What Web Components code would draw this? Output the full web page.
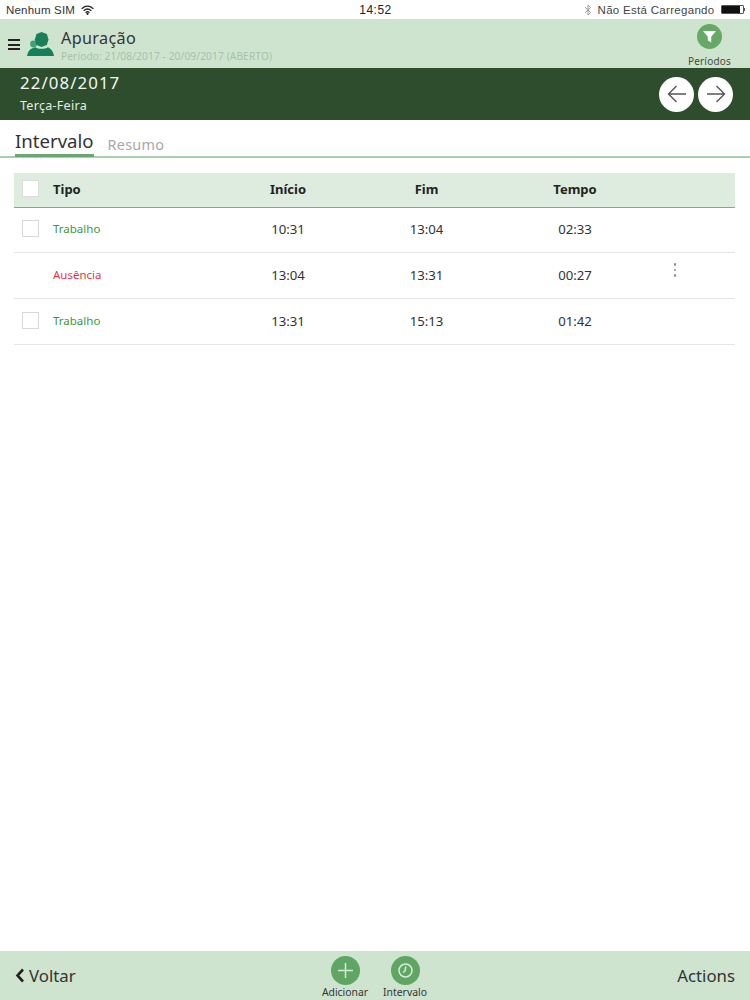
<!DOCTYPE html>
<html lang="pt">
<head>
<meta charset="utf-8">
<title>Apuração</title>
<style>
  html, body { margin: 0; height: 100%; background: #fff; }
  body { font-family: "Noto Sans", sans-serif; }
  app-shell { height: 1000px; }
</style>
</head>
<body>
<app-shell>
  <status-bar slot="top"></status-bar>
  <app-header slot="top"></app-header>
  <date-band slot="top" date="22/08/2017" weekday="Terça-Feira"></date-band>
  <tab-bar slot="top"></tab-bar>
  <interval-table>
    <interval-row tipo="Trabalho" inicio="10:31" fim="13:04" tempo="02:33" check></interval-row>
    <interval-row tipo="Ausência" inicio="13:04" fim="13:31" tempo="00:27" absent menu></interval-row>
    <interval-row tipo="Trabalho" inicio="13:31" fim="15:13" tempo="01:42" check></interval-row>
  </interval-table>
  <app-footer slot="bottom"></app-footer>
</app-shell>

<script>
class AppShell extends HTMLElement {
  constructor() {
    super();
    this.attachShadow({ mode: 'open' }).innerHTML = `
      <style>
        :host { display: flex; flex-direction: column; }
        main { flex: 1; }
      </style>
      <slot name="top"></slot>
      <main><slot></slot></main>
      <slot name="bottom"></slot>
    `;
  }
}

class StatusBar extends HTMLElement {
  constructor() {
    super();
    this.attachShadow({ mode: 'open' }).innerHTML = `
      <style>
        :host {
          display: grid; grid-template-columns: 1fr auto 1fr; align-items: center;
          height: 19px; padding: 0 5px 0 6px;
          font: 11.5px "Liberation Sans", sans-serif; color: #333; letter-spacing: .2px;
        }
        .left { display: flex; align-items: center; gap: 6px; }
        .mid { font-size: 12px; letter-spacing: .5px; color: #222; }
        .right { display: flex; align-items: center; justify-content: flex-end; gap: 6px; color: #444; letter-spacing: .3px; }
        .batt { display: flex; align-items: center; }
        .batt i { display: block; width: 21px; height: 7px; background: linear-gradient(90deg, #111 85%, #fff 85%); border: 1px solid #555; border-radius: 1px; }
        .batt b { display: block; width: 1.5px; height: 3px; background: #555; }
      </style>
      <div class="left">
        <span>Nenhum SIM</span>
        <svg width="13" height="10" viewBox="0 0 13 10" fill="none" stroke="#222" stroke-width="1.3" stroke-linecap="round">
          <path d="M1 3.4C4.3.5 8.7.5 12 3.4"/><path d="M3 5.4c2.1-1.7 4.9-1.7 7 0"/><path d="M5 7.3c.9-.7 2.1-.7 3 0"/>
          <circle cx="6.5" cy="8.8" r=".5" fill="#222"/>
        </svg>
      </div>
      <div class="mid">14:52</div>
      <div class="right">
        <svg width="8" height="12" viewBox="0 0 8 12" fill="none" stroke="#999" stroke-width="1">
          <path d="M1 3.2 6.6 8.4 4 11V1L6.6 3.6 1 8.8"/>
        </svg>
        <span>Não Está Carregando</span>
        <span class="batt"><i></i><b></b></span>
      </div>
    `;
  }
}

class AppHeader extends HTMLElement {
  constructor() {
    super();
    this.attachShadow({ mode: 'open' }).innerHTML = `
      <style>
        :host {
          display: flex; align-items: center; height: 49px; box-sizing: border-box;
          padding: 0 19px 0 8px; background: #cfe4cf; color: #333;
        }
        .burger { width: 12px; height: 11px; margin-right: 7px; margin-top: 2px;
          border-top: 2px solid #222; border-bottom: 2px solid #222; box-sizing: border-box; position: relative; }
        .burger::after { content: ""; position: absolute; left: 0; right: 0; top: 2.5px; height: 2px; background: #222; }
        .logo { margin-right: 7px; margin-top: 0; }
        .titles { flex: 1; margin-top: 3px; }
        h1 { margin: 0; font: 400 16.2px/20px "Noto Sans", sans-serif; color: #333; letter-spacing: .35px; }
        p { margin: 1px 0 0; font: 400 10.2px/14px "Noto Sans", sans-serif; color: #a9bfa9; letter-spacing: .1px; }
        .periodos { display: flex; flex-direction: column; align-items: center; gap: 6px; margin-top: 3px;
          font: 400 10px/12px "Noto Sans", sans-serif; color: #3d4f3d; letter-spacing: .2px; }
        .round { width: 25px; height: 25px; border-radius: 50%; background: #66a866;
          display: flex; align-items: center; justify-content: center; }
      </style>
      <div class="burger"></div>
      <svg class="logo" width="27" height="26" viewBox="0 0 27 26">
        <circle cx="6.5" cy="13" r="3.4" fill="#3f9f78"/>
        <path d="M14.5 1 19.8 3 21.5 8.5 19.8 14 14.5 16 9.5 14 7.8 8.5 9.5 3Z" fill="#1a7f58"/>
        <path d="M0 25C.8 21 2.4 18.2 5.5 17.2L8.5 16.2C11 18.2 17.5 18.4 21 16.2 24.5 17.6 26.5 21 27 25Z" fill="#14805a"/>
      </svg>
      <div class="titles">
        <h1>Apuração</h1>
        <p>Período: 21/08/2017 - 20/09/2017 (ABERTO)</p>
      </div>
      <div class="periodos">
        <span class="round">
          <svg width="15" height="15" viewBox="0 0 15 15"><path d="M1 2H14L9.2 7.7V13.5L5.8 11.5V7.7Z" fill="#fff"/></svg>
        </span>
        <span>Períodos</span>
      </div>
    `;
  }
}

class DateBand extends HTMLElement {
  constructor() {
    super();
    this.attachShadow({ mode: 'open' }).innerHTML = `
      <style>
        :host {
          display: flex; align-items: center; height: 52px; box-sizing: border-box;
          padding: 0 17px 0 20px; background: #2e4d2c; color: #fff;
        }
        .txt { flex: 1; }
        .date { font: 400 16.8px/22px "Noto Sans", sans-serif; letter-spacing: 1.1px; color: #f3f7f3; margin-top: 0; }
        .day { font: 400 12.6px/21px "Noto Sans", sans-serif; color: #e4ece4; letter-spacing: .25px; margin-top: 1px; }
        .btns { display: flex; gap: 4px; }
        .btn { width: 35px; height: 35px; border-radius: 50%; background: #fff; display: flex; align-items: center; justify-content: center; }
      </style>
      <div class="txt">
        <div class="date">${this.getAttribute('date')}</div>
        <div class="day">${this.getAttribute('weekday')}</div>
      </div>
      <div class="btns">
        <span class="btn">
          <svg width="20" height="18" viewBox="0 0 20 18" fill="none" stroke="#555" stroke-width="1.4"><path d="M19 9H1.5M9.5 1 1.5 9l8 8"/></svg>
        </span>
        <span class="btn">
          <svg width="20" height="18" viewBox="0 0 20 18" fill="none" stroke="#555" stroke-width="1.4"><path d="M1 9h17.5M10.5 1l8 8-8 8"/></svg>
        </span>
      </div>
    `;
  }
}

class TabBar extends HTMLElement {
  constructor() {
    super();
    this.attachShadow({ mode: 'open' }).innerHTML = `
      <style>
        :host {
          display: flex; align-items: flex-end; gap: 14px; height: 38px; box-sizing: border-box;
          padding-left: 15px; border-bottom: 2px solid #a9d0a9;
        }
        .tab { font: 400 14.4px/20px "Noto Sans", sans-serif; color: #a8a8a8; padding-bottom: 1px; letter-spacing: .25px; }
        .on { font-size: 18.6px; line-height: 24px; color: #333; letter-spacing: 0; padding-bottom: 1px; margin-bottom: -1px; border-bottom: 3px solid #6aa872; }
      </style>
      <span class="tab on">Intervalo</span>
      <span class="tab">Resumo</span>
    `;
  }
}

// colunas compartilhadas entre o cabecalho e as linhas
const COLS = 'grid-template-columns: 39px 165px 140px 137px 160px 40px 40px;';

class IntervalTable extends HTMLElement {
  constructor() {
    super();
    this.attachShadow({ mode: 'open' }).innerHTML = `
      <style>
        :host { display: block; margin: 15px 15px 0 14px; }
        .head {
          display: grid; ${COLS} align-items: center; height: 35px; box-sizing: border-box;
          background: #deecdf; border-bottom: 1.5px solid #8aa58a;
          font: 700 13px "Noto Sans", sans-serif; color: #222; text-align: center;
        }
        .head span { margin-bottom: 2px; }
        .tipo { text-align: left; }
        .head .box { width: 15px; height: 15px; margin-left: 8px; margin-bottom: 3px; background: #fff; border: 1px solid #dcdcdc; }
      </style>
      <div class="head">
        <span class="box"></span>
        <span class="tipo">Tipo</span>
        <span>Início</span>
        <span>Fim</span>
        <span>Tempo</span>
      </div>
      <slot></slot>
    `;
  }
}

class IntervalRow extends HTMLElement {
  constructor() {
    super();
    const absent = this.hasAttribute('absent');
    this.attachShadow({ mode: 'open' }).innerHTML = `
      <style>
        :host {
          display: grid; ${COLS} align-items: center; height: 46px; box-sizing: border-box;
          border-bottom: 1px solid #e6e3ea;
          font: 400 13.2px "Noto Sans", sans-serif; color: #333; text-align: center;
        }
        :host(:first-child) { height: 45px; }
        .box { width: 15px; height: 15px; margin-left: 8px; margin-bottom: 3px; border: 1px solid #d8d8d8; }
        .tipo { text-align: left; font-size: 11.5px; color: ${absent ? '#e8383f' : '#3a9a40'}; margin-bottom: 3px; }
        span { margin-bottom: 2px; }
        .dots { justify-self: center; display: grid; gap: 3px; margin-bottom: 11px; }
        .dots i { display: block; width: 2.5px; height: 2.5px; border-radius: 50%; background: #8c8c8c; }
      </style>
      ${this.hasAttribute('check') ? '<div class="box"></div>' : '<div></div>'}
      <div class="tipo">${this.getAttribute('tipo')}</div>
      <span>${this.getAttribute('inicio')}</span>
      <span>${this.getAttribute('fim')}</span>
      <span>${this.getAttribute('tempo')}</span>
      ${this.hasAttribute('menu') ? '<div class="dots"><i></i><i></i><i></i></div>' : '<div></div>'}
    `;
  }
}

class AppFooter extends HTMLElement {
  constructor() {
    super();
    this.attachShadow({ mode: 'open' }).innerHTML = `
      <style>
        :host {
          display: grid; grid-template-columns: 1fr auto 1fr; align-items: center; height: 49px;
          padding: 0 15px; background: #cfe4cf; color: #333;
          font: 400 16.8px "Noto Sans", sans-serif;
        }
        .voltar { display: flex; align-items: center; gap: 4px; }
        .actions { text-align: right; }
        .mid { display: flex; gap: 14px; }
        .act { display: flex; flex-direction: column; align-items: center; gap: 1px; width: 46px;
          font-size: 10.4px; line-height: 13px; color: #333; padding-top: 4px; }
        .round { width: 29px; height: 29px; border-radius: 50%; background: #5fa563; display: flex; align-items: center; justify-content: center; }
      </style>
      <div class="voltar">
        <svg width="10" height="15" viewBox="0 0 10 15" fill="none" stroke="#222" stroke-width="2.6"><path d="M8 1.5 2.5 7.5 8 13.5"/></svg>
        <span>Voltar</span>
      </div>
      <div class="mid">
        <div class="act">
          <span class="round"><svg width="17" height="17" viewBox="0 0 17 17" stroke="#d8ecd8" stroke-width="1.5"><path d="M8.5 1v15M1 8.5h15"/></svg></span>
          <span>Adicionar</span>
        </div>
        <div class="act">
          <span class="round"><svg width="17" height="17" viewBox="0 0 17 17" fill="none" stroke="#d8ecd8" stroke-width="1.5"><circle cx="8.5" cy="8.5" r="6.5"/><path d="M8.8 4.5 8 9l-2 1.5"/></svg></span>
          <span>Intervalo</span>
        </div>
      </div>
      <div class="actions">Actions</div>
    `;
  }
}

customElements.define('app-shell', AppShell);
customElements.define('status-bar', StatusBar);
customElements.define('app-header', AppHeader);
customElements.define('date-band', DateBand);
customElements.define('tab-bar', TabBar);
customElements.define('interval-table', IntervalTable);
customElements.define('interval-row', IntervalRow);
customElements.define('app-footer', AppFooter);
</script>
</body>
</html>
